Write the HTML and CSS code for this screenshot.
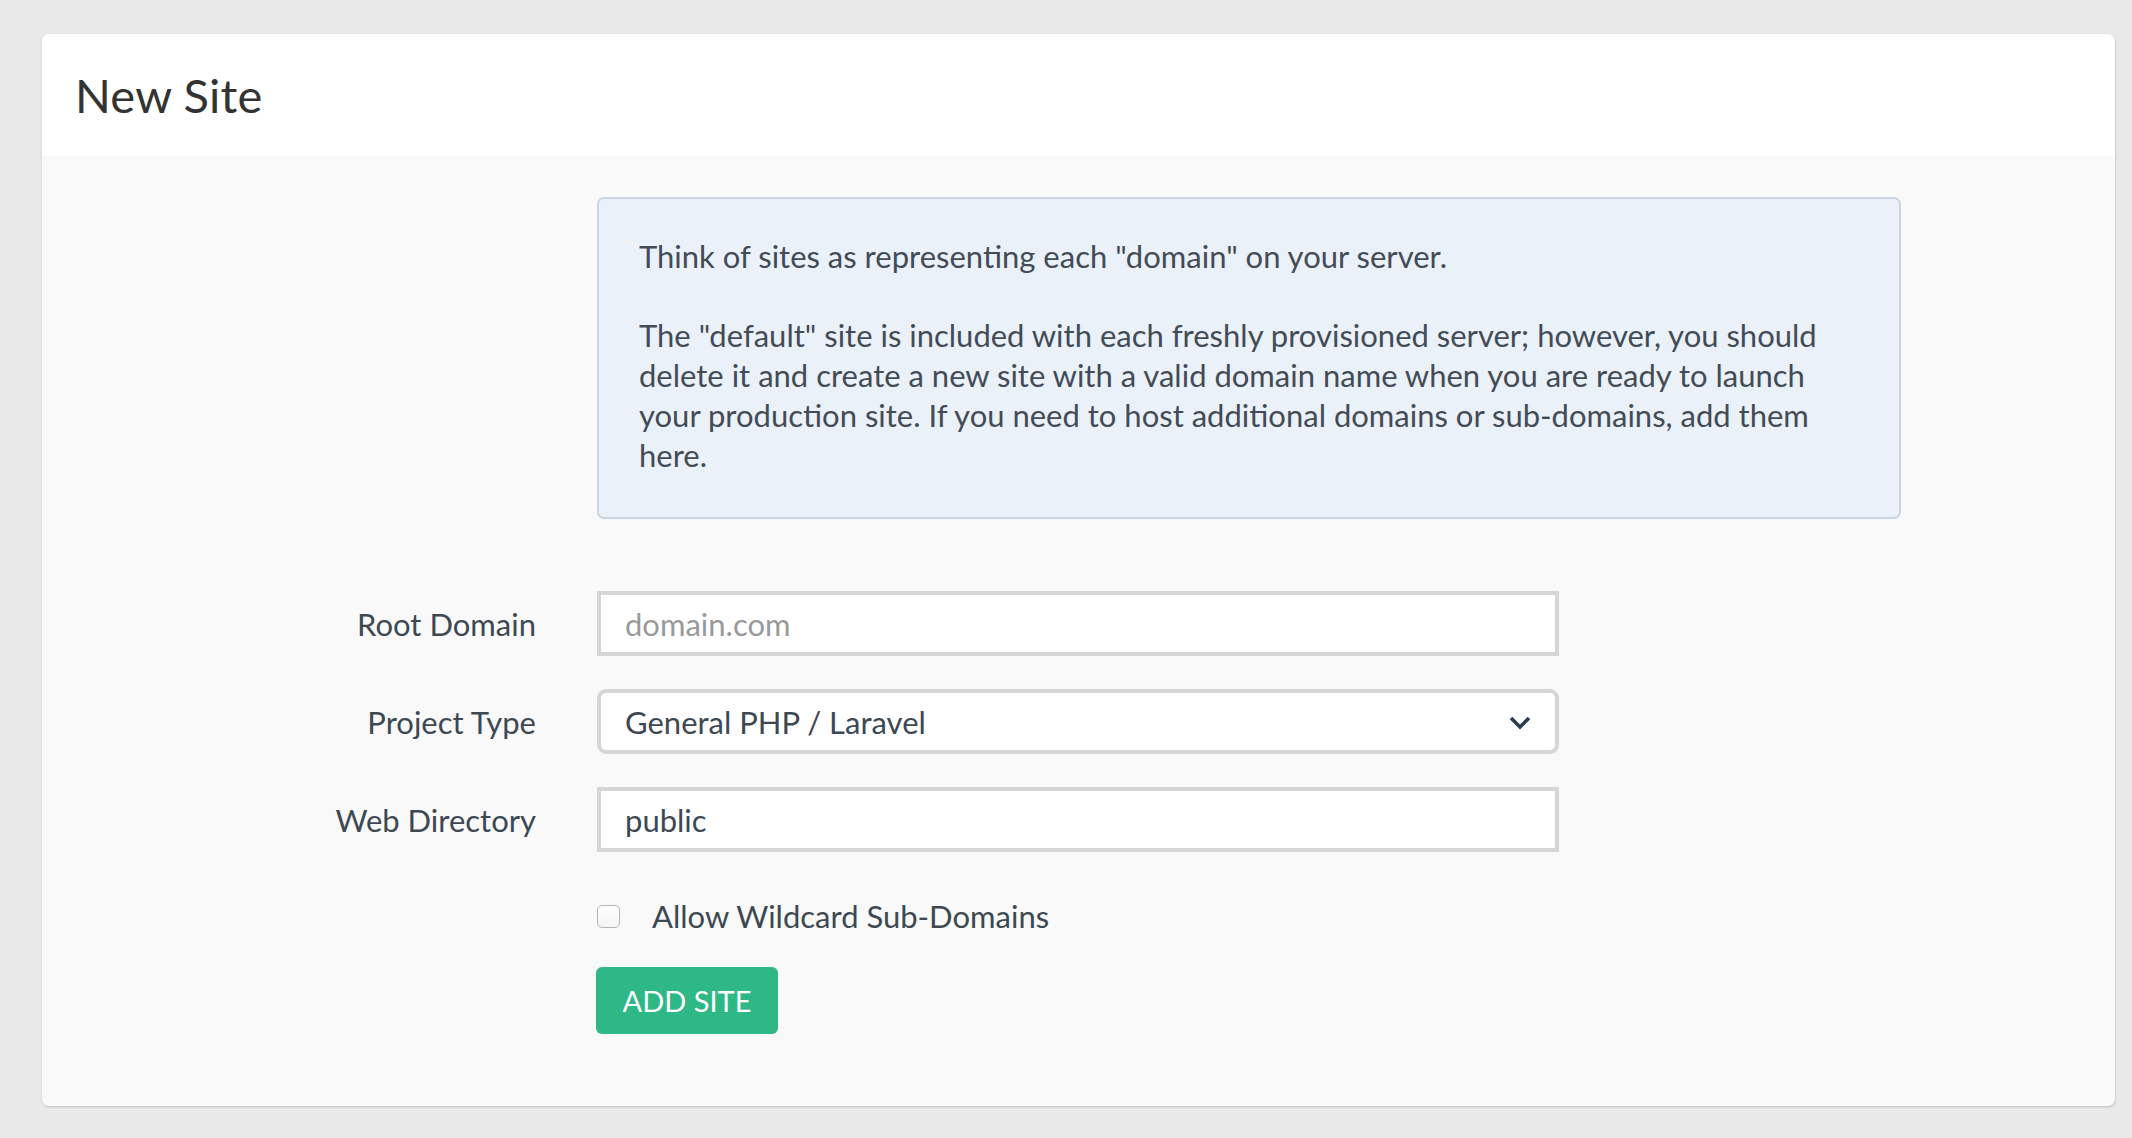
FILE: index.html
```html
<!DOCTYPE html>
<html lang="en">
<head>
<meta charset="utf-8">
<title>New Site</title>
<link rel="stylesheet" href="styles.css">
</head>
<body>
<div class="page">
  <div class="card">
    <div class="card-header">
      <h1 class="title">New Site</h1>
    </div>
    <div class="card-body">
      <div class="row info-row">
        <div class="label-col"></div>
        <div class="info">
          <p>Think of sites as representing each "domain" on your server.</p>
          <p>The "default" site is included with each freshly provisioned server; however, you should delete it and create a new site with a valid domain name when you are ready to launch your production site. If you need to host additional domains or sub-domains, add them here.</p>
        </div>
      </div>
      <div class="row field-row">
        <label class="label-col field-label" for="root">Root Domain</label>
        <input class="control" id="root" type="text" placeholder="domain.com">
      </div>
      <div class="row field-row">
        <label class="label-col field-label" for="type">Project Type</label>
        <div class="control select">
          <span class="select-value">General PHP / Laravel</span>
          <svg class="chevron" width="22" height="14" viewBox="0 0 22 14"><path d="M2 2 L11 11 L20 2" fill="none" stroke="#2c3e50" stroke-width="3.6"/></svg>
        </div>
      </div>
      <div class="row field-row">
        <label class="label-col field-label" for="dir">Web Directory</label>
        <input class="control" id="dir" type="text" value="public">
      </div>
      <div class="row check-row">
        <div class="label-col"></div>
        <label class="check">
          <span class="box"></span>
          <span class="check-text">Allow Wildcard Sub-Domains</span>
        </label>
      </div>
      <div class="row button-row">
        <div class="label-col"></div>
        <button class="btn" type="button">ADD SITE</button>
      </div>
    </div>
  </div>
</div>
</body>
</html>
```
FILE: styles.css
```css
html, body {
  margin: 0;
  padding: 0;
  background: #e9e9e9;
}
body {
  font-family: Lato, "Open Sans", sans-serif;
  color: #3d4852;
}
.page {
  padding: 34px 17px 31px 42px;
}
.card {
  background: #f9f9f9;
  border-radius: 7px;
  box-shadow: 0 1px 3px rgba(0, 0, 0, 0.12), 1px 1px 2px rgba(0, 0, 0, 0.06);
  overflow: hidden;
}
.card-header {
  background: #fff;
  height: 122px;
  display: flex;
  align-items: center;
  padding-left: 33px;
}
.title {
  margin: 0;
  font-weight: 400;
  font-size: 47px;
  color: #333;
  letter-spacing: 0.2px;
}
.card-body {
  padding: 41px 0 72px 0;
}
.row {
  display: flex;
  align-items: center;
  gap: 61px;
}
.label-col {
  width: 494px;
  flex: none;
}
.field-label {
  text-align: right;
  font-size: 31px;
  color: #3d4852;
}
.info {
  width: 1304px;
  box-sizing: border-box;
  background: #eaf1f9;
  border: 2px solid #c9d5e2;
  border-radius: 7px;
  padding: 37px 60px 42px 40px;
  font-size: 31px;
  line-height: 40px;
  color: #434c56;
}
.info p {
  margin: 0;
}
.info p + p {
  margin-top: 39px;
}
.field-row {
  margin-top: 33px;
}
.info-row + .field-row {
  margin-top: 72px;
}
.control {
  width: 962px;
  height: 65px;
  box-sizing: border-box;
  border: 4px solid #d6d6d6;
  background: #fff;
  padding: 0 24px;
  font-family: Lato, "Open Sans", sans-serif;
  font-size: 31px;
  color: #3d4852;
  outline: none;
  margin: 0;
  border-radius: 0;
}
.control::placeholder {
  color: #999;
}
.select {
  border-radius: 9px;
  display: flex;
  align-items: center;
  justify-content: space-between;
  padding-right: 24px;
}
.chevron {
  display: block;
  margin-top: 2px;
}
.check-row {
  margin-top: 44px;
  height: 40px;
}
.check {
  display: flex;
  align-items: center;
  gap: 32px;
  font-size: 31px;
  color: #3d4852;
}
.box {
  width: 23px;
  height: 23px;
  box-sizing: border-box;
  border: 1px solid #b5b5b5;
  border-radius: 5px;
  background: linear-gradient(#fff, #f3f3f3);
}
.button-row {
  margin-top: 31px;
}
.btn {
  width: 182px;
  height: 67px;
  border: none;
  border-radius: 6px;
  background: #2eb886;
  color: #fff;
  font-family: Lato, "Open Sans", sans-serif;
  font-size: 29px;
  padding: 0;
  margin-left: -1px;
}
```
